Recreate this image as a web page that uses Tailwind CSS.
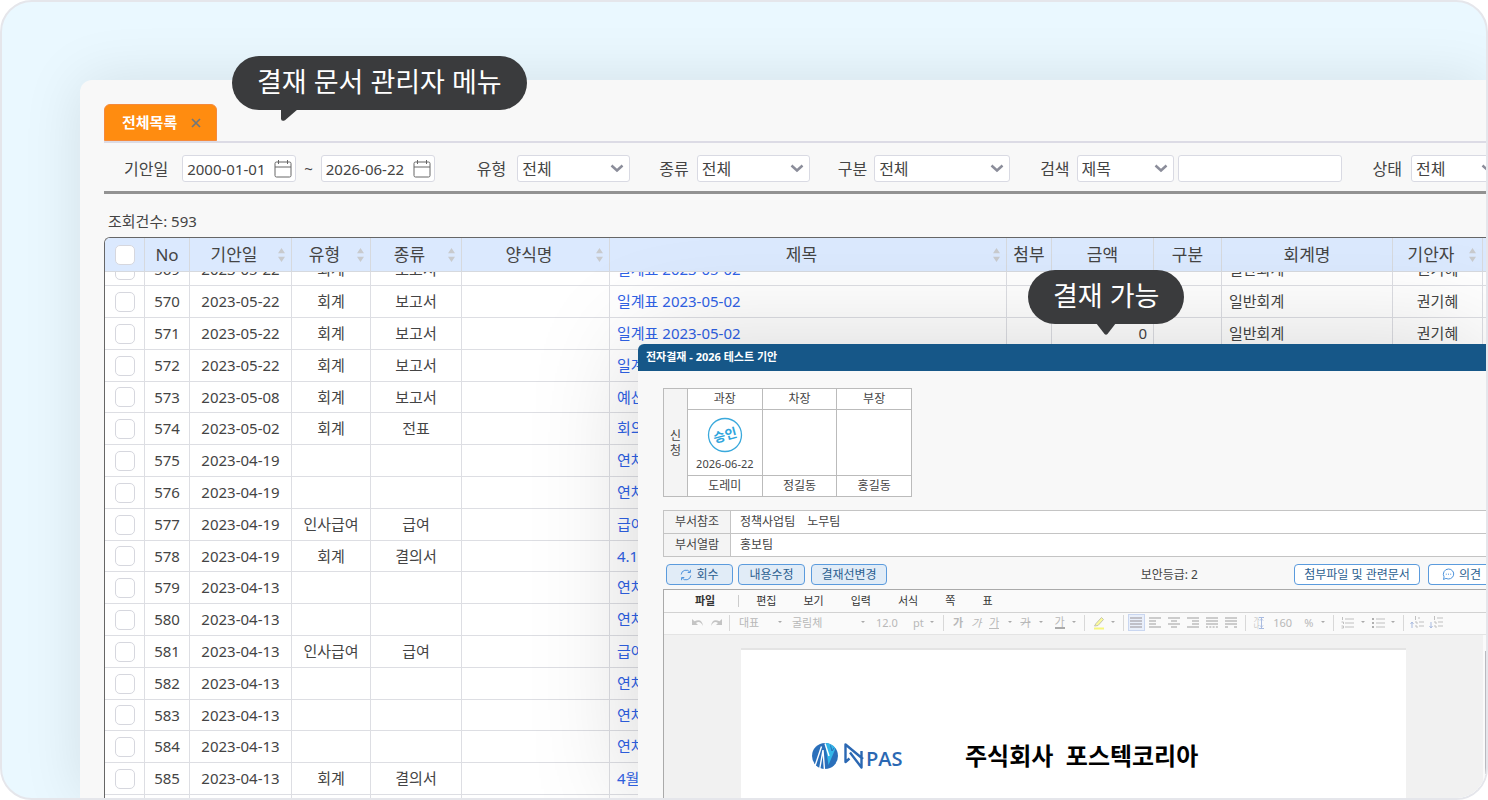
<!DOCTYPE html>
<html lang="ko">
<head>
    <meta charset="UTF-8">
    <meta name="viewport" content="width=device-width, initial-scale=1.0">
    <title>전자결재 - 결재 문서 관리</title>
    <script src="https://cdn.jsdelivr.net/npm/@tailwindcss/browser@4"></script>
</head>
<body class="bg-white font-['Noto_Sans','Noto_Sans_CJK_KR',sans-serif] text-[#444]">

    <!-- Shared icons -->
    <svg class="hidden">
        <symbol id="chevron" viewBox="0 0 14 9"><path d="M1.500 1.500 7 6.500l5.500-5" fill="none" stroke="#8b8d9a" stroke-width="2.500"/></symbol>
        <symbol id="calendar" viewBox="0 0 18 19">
            <rect x="1" y="3" width="16" height="15" rx="1.500" fill="none" stroke="#666"/>
            <path d="M1 8h16M4.500 1v4M13.500 1v4" stroke="#666" fill="none"/>
        </symbol>
        <symbol id="caret" viewBox="0 0 4 3"><path d="M0 0h4L2 2z" fill="#aaa"/></symbol>
    </svg>

    <div class="relative h-screen w-full overflow-hidden rounded-[32px] border-2 border-[#e5e6eb] bg-[#eaf8ff] pl-[78px] pt-[78px]">

        <!-- Document list window -->
        <main class="flex h-full flex-col rounded-tl-xl bg-[#f8f8f8] pl-6 pt-6 shadow-[0_0_60px_rgba(0,0,0,0.1)]">
            <!-- Tabs -->
            <div class="flex h-[39px] shrink-0 items-start border-b-2 border-[#dcdbe5]">
                <div class="flex h-[37px] w-[113px] items-center justify-between rounded-t-md border border-[#f58a3c] bg-[#ff8c10] pl-[17px] pr-[15px]">
                    <span class="text-[15px] font-bold text-white">전체목록</span>
                    <button type="button" aria-label="닫기">
                        <svg class="h-[10px] w-[10px]" viewBox="0 0 10 10"><path d="M1 1l8 8M9 1 1 9" stroke="#70777c" stroke-width="1.700"/></svg>
                    </button>
                </div>
            </div>

            <!-- Search filters -->
            <form class="flex h-[51px] shrink-0 items-center border-b-3 border-[#929292] pl-5 pt-[3px] text-base whitespace-nowrap">
                <label for="date-from" class="mr-[14px]">기안일</label>
                <div class="relative">
                    <input id="date-from" type="text" value="2000-01-01" class="h-[27px] w-[114px] rounded-[3px] border border-[#d9dae3] bg-white pl-1 text-[15px]">
                    <svg class="absolute right-1 top-1 h-[19px] w-[18px]"><use href="#calendar"/></svg>
                </div>
                <span class="mx-2 text-[15px]">~</span>
                <div class="relative">
                    <input type="text" value="2026-06-22" aria-label="기안일 종료" class="h-[27px] w-[114px] rounded-[3px] border border-[#d9dae3] bg-white pl-1 text-[15px]">
                    <svg class="absolute right-1 top-1 h-[19px] w-[18px]"><use href="#calendar"/></svg>
                </div>

                <label for="type" class="ml-[42px] mr-[11px]">유형</label>
                <div class="relative">
                    <select id="type" class="h-[27px] w-[113px] appearance-none rounded-[3px] border border-[#d9dae3] bg-white pl-1"><option>전체</option></select>
                    <svg class="pointer-events-none absolute right-[6px] top-[9px] h-[9px] w-[14px]"><use href="#chevron"/></svg>
                </div>

                <label for="kind" class="ml-[29px] mr-2">종류</label>
                <div class="relative">
                    <select id="kind" class="h-[27px] w-[113px] appearance-none rounded-[3px] border border-[#d9dae3] bg-white pl-1"><option>전체</option></select>
                    <svg class="pointer-events-none absolute right-[6px] top-[9px] h-[9px] w-[14px]"><use href="#chevron"/></svg>
                </div>

                <label for="division" class="ml-[28px] mr-[7px]">구분</label>
                <div class="relative">
                    <select id="division" class="h-[27px] w-[136px] appearance-none rounded-[3px] border border-[#d9dae3] bg-white pl-1"><option>전체</option></select>
                    <svg class="pointer-events-none absolute right-[6px] top-[9px] h-[9px] w-[14px]"><use href="#chevron"/></svg>
                </div>

                <label for="search-field" class="ml-[30px] mr-[7px]">검색</label>
                <div class="relative">
                    <select id="search-field" class="h-[27px] w-[97px] appearance-none rounded-[3px] border border-[#d9dae3] bg-white pl-1"><option>제목</option></select>
                    <svg class="pointer-events-none absolute right-[6px] top-[9px] h-[9px] w-[14px]"><use href="#chevron"/></svg>
                </div>
                <input type="text" aria-label="검색어" class="ml-1 h-[27px] w-[164px] shrink-0 rounded-[3px] border border-[#d9dae3] bg-white px-1">

                <label for="status" class="ml-[31px] mr-[9px]">상태</label>
                <div class="relative shrink-0">
                    <select id="status" class="h-[27px] w-[90px] appearance-none rounded-[3px] border border-[#d9dae3] bg-white pl-1"><option>전체</option></select>
                    <svg class="pointer-events-none absolute right-[6px] top-[9px] h-[9px] w-[14px]"><use href="#chevron"/></svg>
                </div>
            </form>

            <p class="mt-4 mb-[5px] pl-1 text-[15px] leading-[22px]">조회건수: 593</p>

            <!-- Document table -->
            <div class="flex min-h-0 flex-1 flex-col overflow-hidden rounded-tl-md border-l border-t border-[#666] bg-white">
                <table class="w-[calc(100%+60px)] shrink-0 table-fixed border-separate border-spacing-0 bg-[#dbe9fe] text-center text-[17px] leading-6 whitespace-nowrap [&_th]:h-[34px] [&_th]:border-b [&_th]:border-r [&_th]:border-[#d6d9de] [&_th]:p-0 [&_th]:font-normal">
                    <colgroup>
                        <col class="w-[40px]"><col class="w-[45px]"><col class="w-[102px]"><col class="w-[79px]"><col class="w-[91px]">
                        <col class="w-[148px]"><col><col class="w-[45px]"><col class="w-[102px]"><col class="w-[68px]">
                        <col class="w-[171px]"><col class="w-[90px]"><col class="w-[63px]">
                    </colgroup>
                    <thead><tr id="head"></tr></thead>
                </table>
                <!-- list body, first row partly scrolled away -->
                <div class="min-h-0 flex-1 overflow-hidden">
                    <table class="-mt-[18px] w-[calc(100%+60px)] table-fixed border-separate border-spacing-0 text-center text-[15px] whitespace-nowrap [&_td]:h-8 [&_td]:border-b [&_td]:border-r [&_td]:border-[#dddee3] [&_td]:p-0 [&_tr:nth-child(5n)>td]:h-[31px]">
                        <colgroup>
                            <col class="w-[40px]"><col class="w-[45px]"><col class="w-[102px]"><col class="w-[79px]"><col class="w-[91px]">
                            <col class="w-[148px]"><col><col class="w-[45px]"><col class="w-[102px]"><col class="w-[68px]">
                            <col class="w-[171px]"><col class="w-[90px]"><col class="w-[63px]">
                        </colgroup>
                        <tbody id="rows"></tbody>
                    </table>
                </div>
            </div>
        </main>

        <!-- Approval document popup -->
        <section class="absolute bottom-0 left-[636px] right-0 top-[342px] flex flex-col rounded-tl-md bg-[#f8f8f8] text-xs whitespace-nowrap shadow-[0_0_110px_rgba(0,0,0,0.17)]">
            <h2 class="h-[27px] shrink-0 rounded-tl-md bg-[#165788] pl-2 text-[11px] leading-[26px] font-bold text-white">전자결재 - 2026 테스트 기안</h2>

            <div class="flex min-h-0 flex-1 flex-col pl-[25px] pt-[17px]">
                <!-- Approval line -->
                <table class="w-[249px] table-fixed border-collapse bg-white text-center [&_td]:border [&_td]:border-[#bbb] [&_td]:p-0 [&_th]:border [&_th]:border-[#bbb] [&_th]:p-0 [&_th]:font-normal">
                    <colgroup><col class="w-6"><col><col><col></colgroup>
                    <tr class="h-[21px]">
                        <th rowspan="3" class="bg-[#f4f4f4] leading-[15px]">신<br>청</th>
                        <th>과장</th><th>차장</th><th>부장</th>
                    </tr>
                    <tr class="h-[66px]">
                        <td>
                            <svg class="mx-auto mt-[3px] h-9 w-9" viewBox="0 0 36 36">
                                <circle cx="18" cy="18" r="16.500" fill="none" stroke="#3aa9dc" stroke-width="1.300"/>
                                <text x="18" y="23" transform="rotate(-15 18 18)" text-anchor="middle" font-size="13" font-weight="700" fill="#2fa5dd">승인</text>
                            </svg>
                            <span class="block pt-[3px] text-[11px] leading-4">2026-06-22</span>
                        </td>
                        <td></td><td></td>
                    </tr>
                    <tr class="h-[21px]"><td>도레미</td><td>정길동</td><td>홍길동</td></tr>
                </table>

                <!-- Referenced departments -->
                <table class="mt-[13px] w-[calc(100%+2px)] border-collapse bg-white text-left [&_td]:border [&_td]:border-[#c4c4c4] [&_td]:py-0 [&_td]:pl-[9px] [&_th]:w-[67px] [&_th]:border [&_th]:border-[#c4c4c4] [&_th]:bg-[#f4f4f4] [&_th]:p-0 [&_th]:text-center [&_th]:font-normal">
                    <tr class="h-[23px]"><th>부서참조</th><td>정책사업팀<span class="ml-3">노무팀</span></td></tr>
                    <tr class="h-[23px]"><th>부서열람</th><td>홍보팀</td></tr>
                </table>

                <!-- Actions -->
                <div class="flex h-8 shrink-0 items-center pl-[3px] pt-[3px] text-[#2b6090]">
                    <button type="button" class="mr-[5px] flex h-[21px] w-[67px] items-center justify-center gap-1 rounded border border-[#5b9bdd] bg-[#e1ecf7]">
                        <svg class="h-3 w-3" viewBox="0 0 12 12" fill="none" stroke="#4d93dc"><path d="M1.200 5.500A4.800 4.800 0 0 1 10 3.300M10.800 6.500A4.800 4.800 0 0 1 2 8.700M10.400.8v2.700H7.700M1.600 11.200V8.500h2.700"/></svg>
                        회수
                    </button>
                    <button type="button" class="mr-[6px] h-[21px] w-[67px] rounded border border-[#5b9bdd] bg-[#e1ecf7]">내용수정</button>
                    <button type="button" class="h-[21px] w-[76px] rounded border border-[#5b9bdd] bg-[#e1ecf7]">결재선변경</button>
                    <span class="ml-auto mr-24 text-[#444]">보안등급: 2</span>
                    <button type="button" class="mr-2 h-[21px] w-[126px] rounded border border-[#5b9bdd] bg-white">첨부파일 및 관련문서</button>
                    <button type="button" class="flex h-[21px] w-[58px] items-center gap-1 rounded-l border border-r-0 border-[#5b9bdd] bg-white pl-[13px]">
                        <svg class="h-[13px] w-[13px]" viewBox="0 0 13 13" fill="none" stroke="#4d93dc"><path d="M6.500 1a5.300 5 0 1 1-2.600 9.400L1.500 11.500l.6-2.600A5.200 5.200 0 0 1 6.500 1z"/><path d="M3.800 6.200h1M6 6.200h1M8.200 6.200h1"/></svg>
                        의견
                    </button>
                </div>

                <!-- Editor -->
                <div class="flex min-h-0 flex-1 flex-col border-l border-t border-[#aaa] bg-[#f1f1f1]">
                    <nav class="flex h-[23px] shrink-0 items-center gap-[27px] border-b border-[#d2d2d2] bg-[#fafafa] pl-[31px] text-[11px] text-[#333]">
                        <button type="button" class="font-bold">파일</button>
                        <span class="-mx-1 h-3 border-l border-[#ccc]"></span>
                        <button type="button" class="-ml-[6px]">편집</button>
                        <button type="button">보기</button>
                        <button type="button">입력</button>
                        <button type="button">서식</button>
                        <button type="button">쪽</button>
                        <button type="button">표</button>
                    </nav>

                    <div class="flex h-[22px] shrink-0 items-center border-b border-[#e4e4e4] bg-[#fafafa] pl-7 pb-[2px] text-[11px] leading-none text-[#b8b8b8]">
                        <button type="button" aria-label="실행 취소" class="mr-[6px]"><svg class="h-3 w-3" viewBox="0 0 12 12"><path d="M0 2v6h6L4 6q4-3 7 3Q10 1 2.500 4.300z" fill="#c4c4c4"/></svg></button>
                        <button type="button" aria-label="다시 실행"><svg class="h-3 w-3" viewBox="0 0 12 12"><path d="M12 2v6H6l2-2Q4 3 1 9 2 1 9.500 4.300z" fill="#c4c4c4"/></svg></button>
                        <span class="ml-[7px] h-4 border-l border-[#d8d8d8]"></span>
                        <span class="ml-[9px] w-[39px]">대표</span>
                        <svg class="h-[3px] w-1"><use href="#caret"/></svg>
                        <span class="ml-[10px] w-[69px]">굴림체</span>
                        <svg class="h-[3px] w-1"><use href="#caret"/></svg>
                        <span class="ml-[11px] w-[37px]">12.0</span>
                        <span class="w-[17px]">pt</span>
                        <svg class="h-[3px] w-1"><use href="#caret"/></svg>
                        <span class="ml-[9px] mr-[9px] h-4 border-l border-[#d8d8d8]"></span>
                        <button type="button" class="mr-2 font-bold">가</button>
                        <button type="button" class="mr-2 italic">가</button>
                        <button type="button" class="mr-[9px] border-b border-[#bbb]">가</button>
                        <svg class="h-[3px] w-1"><use href="#caret"/></svg>
                        <button type="button" class="ml-2 mr-2 line-through">가</button>
                        <svg class="h-[3px] w-1"><use href="#caret"/></svg>
                        <button type="button" class="ml-3 mr-[7px] border-b-2 border-[#aaa]">가</button>
                        <svg class="h-[3px] w-1"><use href="#caret"/></svg>
                        <span class="ml-2 mr-2 h-4 border-l border-[#d8d8d8]"></span>
                        <button type="button" aria-label="형광펜" class="mr-[6px]"><svg class="h-[14px] w-3" viewBox="0 0 12 14"><path d="M3 7.500 8.500 1.500l2 2L5 9.500 1.500 10z" fill="#fbfb9a" stroke="#c4c4b0"/><path d="M1 12.500h10" stroke="#f6f67c" stroke-width="2"/></svg></button>
                        <svg class="h-[3px] w-1"><use href="#caret"/></svg>
                        <span class="ml-2 mr-1 h-4 border-l border-[#d8d8d8]"></span>
                        <div class="flex items-center gap-[7px]">
                            <button type="button" aria-label="양쪽 정렬" class="-mr-[3px] flex h-[17px] w-[17px] items-center justify-center border border-[#c9d6f0] bg-[#e9effa]"><svg class="h-[11px] w-3" viewBox="0 0 12 11"><path d="M0 1h12M0 4h12M0 7h12M0 10h12" stroke="#c0c0c8" stroke-width="2"/></svg></button>
                            <button type="button" aria-label="왼쪽 정렬"><svg class="h-[11px] w-3" viewBox="0 0 12 11"><path d="M0 1h12M0 4h7M0 7h7M0 10h12" stroke="#ccc" stroke-width="2"/></svg></button>
                            <button type="button" aria-label="가운데 정렬"><svg class="h-[11px] w-3" viewBox="0 0 12 11"><path d="M0 1h12M3 4h6M0 7h12M3 10h6" stroke="#ccc" stroke-width="2"/></svg></button>
                            <button type="button" aria-label="오른쪽 정렬"><svg class="h-[11px] w-3" viewBox="0 0 12 11"><path d="M0 1h12M5 4h7M5 7h7M0 10h12" stroke="#ccc" stroke-width="2"/></svg></button>
                            <button type="button" aria-label="배분 정렬"><svg class="h-[11px] w-3" viewBox="0 0 12 11"><path d="M0 1h12M0 4h12M0 7h12" stroke="#ccc" stroke-width="2"/><path d="M0 10h12" stroke="#ccc" stroke-width="2" stroke-dasharray="2 1.300"/></svg></button>
                            <button type="button" aria-label="나눔 정렬"><svg class="h-[11px] w-3" viewBox="0 0 12 11"><path d="M0 1h12M0 4h12M0 7h12M0 10h3M9 10h3" stroke="#ccc" stroke-width="2"/></svg></button>
                        </div>
                        <span class="ml-2 mr-2 h-4 border-l border-[#d8d8d8]"></span>
                        <span class="text-[6px] leading-[6px]">가<br>나</span>
                        <svg class="mr-[9px] h-3 w-[5px]" viewBox="0 0 5 12"><path d="M0 .5h5M0 11.500h5M2.500 1v10M1 3.500 2.500 2 4 3.500M1 8.500 2.500 10 4 8.500" stroke="#a9bbe0" fill="none"/></svg>
                        <span class="w-[31px]">160</span>
                        <span class="w-[17px]">%</span>
                        <svg class="h-[3px] w-1"><use href="#caret"/></svg>
                        <span class="ml-2 mr-[7px] h-4 border-l border-[#d8d8d8]"></span>
                        <button type="button" aria-label="번호 목록" class="mr-[7px]"><svg class="h-3 w-[13px]" viewBox="0 0 13 12"><path d="M4 2h9M4 6h9M4 10h9M1.500 0v3M.5 5h2v2M.5 9h2v2h-2" stroke="#c0c0c0" fill="none"/></svg></button>
                        <svg class="h-[3px] w-1"><use href="#caret"/></svg>
                        <button type="button" aria-label="글머리 목록" class="ml-[7px] mr-[6px]"><svg class="h-3 w-[13px]" viewBox="0 0 13 12"><path d="M4 2h9M4 6h9M4 10h9" stroke="#c0c0c0"/><path d="M0 2h2M0 6h2M0 10h2" stroke="#b0b0b0" stroke-width="2"/></svg></button>
                        <svg class="h-[3px] w-1"><use href="#caret"/></svg>
                        <span class="ml-2 mr-[6px] h-4 border-l border-[#d8d8d8]"></span>
                        <button type="button" aria-label="수준 올리기" class="mr-[5px]"><svg class="h-[13px] w-[14px]" viewBox="0 0 14 13"><path d="M8 2h2M9 6h5M9 10h5M5.500 0v4M5 6h2v2M5 10h2v2" stroke="#c0c0c0" fill="none"/><path d="M2 12V6M.5 8 2 6l1.500 2" stroke="#a9bbe0" fill="none"/></svg></button>
                        <button type="button" aria-label="수준 내리기"><svg class="h-[13px] w-[14px]" viewBox="0 0 14 13"><path d="M8 2h6M9 6h5M9 10h5M5.500 0v4M5 6h2v2M5 10h2v2" stroke="#c0c0c0" fill="none"/><path d="M2 6v6M.5 10 2 12l1.500-2" stroke="#a9bbe0" fill="none"/></svg></button>
                    </div>

                    <div class="flex min-h-0 flex-1">
                        <div class="flex flex-1 pl-[77px] pr-[77px] pt-[13px]">
                            <!-- Page -->
                            <article class="flex flex-1 items-start border-t-2 border-[#e4e4e4] bg-white pl-[70px] pt-[90px]">
                                <svg class="mt-[2px] h-7 w-[93px]" viewBox="0 0 93 28" aria-label="NPAS">
                                    <circle cx="14" cy="14" r="13" fill="#2a6fba"/>
                                    <path d="M14 1A13 13 0 0 1 24.500 6.500L17.500 23z" fill="#33b6e8"/>
                                    <path d="M3.500 25.500 10.500 4.500M8.500 28 12 8l1.500 20M14 1.500 18 14" fill="none" stroke="#fff" stroke-width="1.400"/>
                                    <path d="M19.500 3.500 21 9l2-3" fill="none" stroke="#2a6fba" stroke-width="1"/>
                                    <path d="M38.500 16.500 34.500 20V2.500L52 17M39 10.500 50.500 25.500V9" fill="none" stroke="#2b68b3" stroke-width="2.400" stroke-linejoin="round"/>
                                    <text x="55" y="24" font-size="20" font-weight="600" font-family="Open Sans, sans-serif" fill="#2b68b3">PAS</text>
                                </svg>
                                <h1 class="ml-[61px] text-2xl leading-8 font-bold text-black">주식회사&nbsp; 포스텍코리아</h1>
                            </article>
                        </div>
                        <div class="flex w-[3px] flex-col bg-[#fafafa] pt-4 pb-6 pl-[2px]"><span class="flex-1 bg-[#b9bac0]"></span></div>
                    </div>
                </div>
            </div>
        </section>

        <!-- Callouts -->
        <div class="absolute left-[230px] top-[54px] h-[54px] rounded-full bg-[#3a3b3d] px-[25px] text-[27px] leading-[51px] whitespace-nowrap text-white">
            결재 문서 관리자 메뉴
            <svg class="absolute left-[49px] top-[53px] h-3 w-[17px]" viewBox="0 0 17 12"><path d="M0 0h17L4 11.300Q0 13 0 9.500z" fill="#3a3b3d"/></svg>
        </div>
        <div class="absolute left-[1026px] top-[268px] h-[54px] rounded-full bg-[#3a3b3d] px-[25px] text-[27px] leading-[51px] whitespace-nowrap text-white">
            결재 가능
            <svg class="absolute left-[68px] top-[53px] h-3 w-5" viewBox="0 0 20 12"><path d="M0 0h20l-8.500 11q-1.500 1.500-3 0z" fill="#3a3b3d"/></svg>
        </div>
    </div>

    <script>
        const columns = [
            ['No'], ['기안일', true], ['유형', true], ['종류', true], ['양식명', true], ['제목', true],
            ['첨부'], ['금액'], ['구분'], ['회계명'], ['기안자', true], ['']
        ];
        // no, date, type, kind, title, amount, account, drafter
        const docs = [
            [569, '2023-05-22', '회계', '보고서', '일계표 2023-05-02', '', '일반회계', '권기혜'],
            [570, '2023-05-22', '회계', '보고서', '일계표 2023-05-02', '', '일반회계', '권기혜'],
            [571, '2023-05-22', '회계', '보고서', '일계표 2023-05-02', '0', '일반회계', '권기혜'],
            [572, '2023-05-22', '회계', '보고서', '일계표'],
            [573, '2023-05-08', '회계', '보고서', '예산'],
            [574, '2023-05-02', '회계', '전표', '회의'],
            [575, '2023-04-19', '', '', '연차'],
            [576, '2023-04-19', '', '', '연차'],
            [577, '2023-04-19', '인사급여', '급여', '급여'],
            [578, '2023-04-19', '회계', '결의서', '4.13'],
            [579, '2023-04-13', '', '', '연차'],
            [580, '2023-04-13', '', '', '연차'],
            [581, '2023-04-13', '인사급여', '급여', '급여'],
            [582, '2023-04-13', '', '', '연차'],
            [583, '2023-04-13', '', '', '연차'],
            [584, '2023-04-13', '', '', '연차'],
            [585, '2023-04-13', '회계', '결의서', '4월'],
            ['', '', '', '', '']
        ];

        const check = label => `<input type="checkbox" aria-label="${label}" class="block mx-auto h-5 w-5 appearance-none rounded-[5px] border border-[#d6d7de] bg-white">`;
        const sort = '<svg class="mr-[6px] h-4 w-[7px] shrink-0" viewBox="0 0 8 16"><path d="M4 0l4 6H0zM4 16l4-6H0z" fill="#c8cacd"/></svg>';

        document.getElementById('head').innerHTML = `<th>${check('전체 선택')}</th>` + columns.map(([name, sortable]) =>
            `<th><div class="flex items-center"><span class="flex-1">${name}</span>${sortable ? sort : ''}</div></th>`).join('');

        document.getElementById('rows').innerHTML = docs.map(([no, date, type, kind, title, amount = '', account = '', drafter = '']) => `
            <tr>
                <td>${check(no)}</td>
                <td>${no}</td>
                <td>${date}</td>
                <td>${type}</td>
                <td>${kind}</td>
                <td></td>
                <td class="text-left"><a href="#" class="block overflow-hidden pl-[7px] text-[#2f62e6]">${title}</a></td>
                <td></td>
                <td><span class="block pr-[6px] text-right">${amount}</span></td>
                <td></td>
                <td><span class="block pl-[7px] text-left">${account}</span></td>
                <td>${drafter}</td>
                <td></td>
            </tr>`).join('');
    </script>
</body>
</html>
